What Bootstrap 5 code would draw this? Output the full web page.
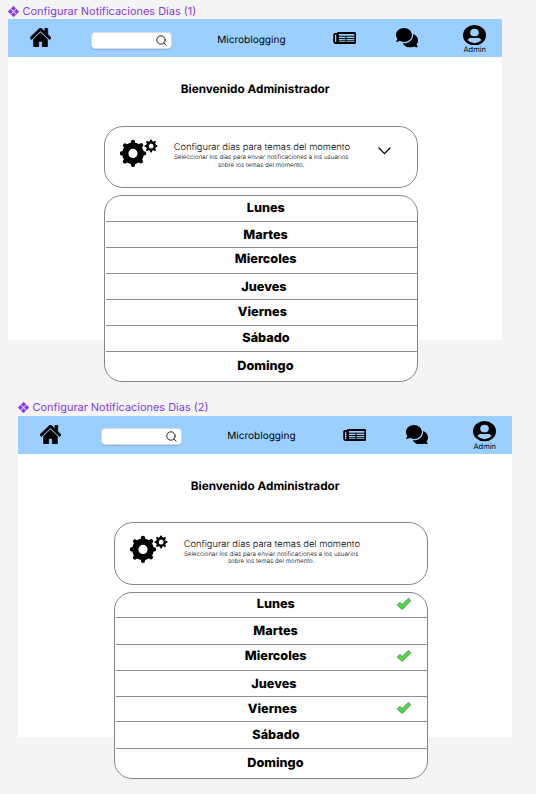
<!DOCTYPE html>
<html lang="es">
<head>
<meta charset="utf-8">
<meta name="viewport" content="width=device-width, initial-scale=1">
<title>Configurar Notificaciones</title>
<link href="https://cdn.jsdelivr.net/npm/bootstrap@5.3.0/dist/css/bootstrap.min.css" rel="stylesheet">
<style>
body{background:#f4f4f4;font-family:Inter,"Liberation Sans",sans-serif;color:#000;height:794px;overflow:hidden;text-rendering:geometricPrecision}
svg{display:block;flex:none}
.board{width:494.4px;margin-left:8px;padding-top:4px;height:396.5px}
.board-second{margin-left:18px;padding-top:3.5px}
.board-name{height:15px;color:#8638e5;font-size:10.95px;line-height:15px;gap:3.5px}
.board-second .board-name{margin-bottom:.5px}
.screen{background:#fff;height:321px}
.topbar{background:#9bcfff;height:38px;padding:0}
.home-link{margin-left:22.4px;margin-top:-1px}
.search-box{width:80.5px;height:17px;margin-left:40px;margin-top:4px;border-radius:4px;border:.5px solid #d5dbe2;background:#fff;padding-right:4.2px;box-shadow:0 1px 1px #0002}
.brand-text{margin-left:45.3px;width:68px;font-size:10.05px;margin-top:3px;line-height:14px}
.news{margin-left:47.8px}
.talk{margin-left:39.5px}
.user-box{margin-left:44.7px;width:24px;font-size:7.5px;line-height:8px;padding-top:2.5px}
.user-box span{margin-top:1px}
.welcome{font-size:11.75px;font-weight:700;line-height:14px;margin:25px 0 0 172.7px}
.config{width:314.2px;height:62.5px;margin:29.6px 0 0 96px;border:1px solid #858585;border-radius:19px;background:#fff;padding:12px 0 0 15.2px}
.config-copy{margin-left:15.5px;width:177px;padding-top:2.5px;font-weight:300}
.config-title{font-size:9.32px;line-height:14px}
.config-help{font-size:6.2px;line-height:7.3px;width:175px;margin-top:-.8px}
.chevron{margin:8.2px 0 0 27.2px}
.days{width:314px;height:187px;margin:7px 0 0 96.2px;border:1px solid #858585;border-radius:18px;background:#fff;font-size:12.65px;font-weight:800;overflow:hidden}
.day{border-bottom:1px solid #8e8e8e;line-height:13px;margin-left:1px}
.day:last-child{border:0}
.d1{height:25.5px;padding:5.5px 16.5px 0 140.6px}
.d2{height:26.5px;padding:7px 16.5px 0 137.1px}
.d3{height:26px;padding:5px 16.5px 0 128.6px}
.d4{height:26px;padding:7px 16.5px 0 135.1px}
.d5{height:25.5px;padding:6px 16.5px 0 131.6px}
.d6{height:26.5px;padding:6.5px 16.5px 0 136.1px}
.d7{height:29px;padding:8px 16.5px 0 131.1px}
.d5 svg{margin-top:-1px}
</style>
<script src="https://cdn.jsdelivr.net/npm/bootstrap@5.3.0/dist/js/bootstrap.bundle.min.js"></script>
</head>
<body>
<svg width="0" height="0" class="position-absolute">
<defs>
<symbol id="i-comp" viewBox="0 0 10 10"><path fill="#8638e5" d="M5 0 7.2 2.2 5 4.4 2.8 2.2zM5 5.6 7.2 7.8 5 10 2.8 7.8zM2.2 2.8 4.4 5 2.2 7.2 0 5zM7.8 2.8 10 5 7.8 7.2 5.6 5z" stroke="#8638e5" stroke-width=".2"/></symbol>
<symbol id="i-home" viewBox="0 32 576 448" preserveAspectRatio="none"><path d="M280.37 148.26L96 300.11V464a16 16 0 0 0 16 16l112.06-.29a16 16 0 0 0 15.92-16V368a16 16 0 0 1 16-16h64a16 16 0 0 1 16 16v95.64a16 16 0 0 0 16 16.05L464 480a16 16 0 0 0 16-16V300L295.67 148.26a12.19 12.19 0 0 0-15.3 0zM571.6 251.47L488 182.56V44.05a12 12 0 0 0-12-12h-56a12 12 0 0 0-12 12v72.61L318.47 43a48 48 0 0 0-61 0L4.34 251.47a12 12 0 0 0-1.6 16.9l25.5 31A12 12 0 0 0 45.15 301l235.22-193.74a12.19 12.19 0 0 1 15.3 0L530.9 301a12 12 0 0 0 16.9-1.6l25.5-31a12 12 0 0 0-1.7-16.93z" stroke="#000" stroke-width="14"/></symbol>
<symbol id="i-search" viewBox="0 0 11 11"><g fill="none" stroke="#111" stroke-width=".9" stroke-linecap="round"><circle cx="5" cy="5" r="4.2"/><path d="M8 8 10.2 10.3"/></g></symbol>
<symbol id="i-news" viewBox="0 0 23 12"><path d="M3.9 1H21.3Q22.1 1 22.1 1.8V10.2Q22.1 11 21.3 11H2.2Q.9 11 .9 9.8V2.6Q.9 1.9 1.6 1.9H3.6M3.9 1V9.8Q3.9 11 2.4 11" fill="none" stroke="#000" stroke-width="1.8"/><path d="M4 4.2H22M4 6.6H22M4 8.8H22M12.8 4V11M5.2 1V10" stroke="#000" stroke-width="1"/></symbol>
<symbol id="i-talk" viewBox="0 32 576 448" preserveAspectRatio="none"><path d="M416 192c0-88.4-93.1-160-208-160S0 103.6 0 192c0 34.3 14.1 65.9 38 92-13.4 30.2-35.5 54.2-35.8 54.5-2.2 2.3-2.8 5.7-1.5 8.7S4.8 352 8 352c36.6 0 66.9-12.3 88.7-25 32.2 15.7 70.3 25 111.3 25 114.9 0 208-71.6 208-160zm122 220c23.9-26 38-57.7 38-92 0-66.9-53.5-124.2-129.3-148.1.9 6.6 1.3 13.3 1.3 20.1 0 105.9-107.7 192-240 192-10.8 0-21.3-.8-31.7-1.9C207.8 439.6 281.8 480 368 480c41 0 79.1-9.2 111.3-25 21.8 12.7 52.1 25 88.7 25 3.2 0 6.1-1.9 7.3-4.8 1.3-2.9.7-6.3-1.5-8.7-.3-.3-22.4-24.2-35.8-54.5z"/></symbol>
<symbol id="i-user" viewBox="0 0 24 24" preserveAspectRatio="none"><path fill-rule="evenodd" d="M12 0a12 12 0 1 1 0 24a12 12 0 0 1 0-24zM12 4.4a4.5 4.5 0 1 0 0 9a4.5 4.5 0 0 0 0-9zM4.6 17.6Q12 25.4 19.4 17.6Q17.8 14.8 14.8 14.8Q12 15.9 9.2 14.8Q6.2 14.8 4.6 17.6z"/></symbol>
<symbol id="i-gears" viewBox="0 0 38 28">
<circle cx="13" cy="14.4" r="7.7" fill="none" stroke="#000" stroke-width="6.2"/>
<g stroke="#000" stroke-width="4.2" stroke-linecap="round"><path d="M13 2.8V5.4M13 23.4V25.9M1.8 14.4H5M22 14.4H24.2"/><path d="M13 2.8V5.4M13 23.4V25.9M1.8 14.4H5M22 14.4H24.2" transform="rotate(45 13 14.4)"/></g>
<circle cx="31" cy="7" r="3.8" fill="none" stroke="#000" stroke-width="2.5"/>
<g stroke="#000" stroke-width="2.1" stroke-linecap="round"><path d="M31 1.5V3.5M31 10.5V12.5M25.5 7H28M35 7H36.5"/><path d="M31 1.5V3.5M31 10.5V12.5M25.5 7H28M35 7H36.5" transform="rotate(45 31 7)"/></g>
</symbol>
<symbol id="i-down" viewBox="0 0 13 8"><path d="M1 1 6.5 6.6 12 1" fill="none" stroke="#000" stroke-width="1.3" stroke-linecap="round" stroke-linejoin="round"/></symbol>
<symbol id="i-tick" viewBox="0 0 14 12"><path d="M.8 6.4 2.3 4.9Q2.9 4.4 3.5 4.9L5.2 6.5 10.9 .9Q11.5 .4 12.1 .9L13.3 2Q13.8 2.6 13.3 3.2L5.8 11Q5.2 11.6 4.6 11L.8 7.6Q.3 7 .8 6.4z" fill="#4fdc49" stroke="#3d6b3b" stroke-width=".7"/></symbol>
</defs>
</svg>

<section class="board">
  <div class="board-name d-flex align-items-center"><svg width="11" height="11"><use href="#i-comp"/></svg><span class="text-nowrap">Configurar Notificaciones Días (1)</span></div>
  <main class="screen">
    <nav class="topbar navbar d-flex flex-nowrap justify-content-start align-items-center">
      <svg class="home-link" width="21" height="19"><use href="#i-home"/></svg>
      <div class="search-box d-flex align-items-center justify-content-end"><svg width="11" height="11"><use href="#i-search"/></svg></div>
      <span class="brand-text text-nowrap">Microblogging</span>
      <svg class="news" width="23.5" height="12"><use href="#i-news"/></svg>
      <svg class="talk" width="22" height="19.5"><use href="#i-talk"/></svg>
      <div class="user-box d-flex flex-column align-items-center"><svg width="23" height="20.5"><use href="#i-user"/></svg><span>Admin</span></div>
    </nav>
    <h1 class="welcome text-nowrap">Bienvenido Administrador</h1>
    <div class="config d-flex align-items-start">
      <svg width="38" height="28"><use href="#i-gears"/></svg>
      <div class="config-copy"><div class="config-title text-nowrap">Configurar días para temas del momento</div><div class="config-help text-center text-nowrap">Seleccionar los días para enviar notificaciones a los usuarios<br>sobre los temas del momento.</div></div>
      <svg class="chevron" width="13" height="8"><use href="#i-down"/></svg>
    </div>
    <div class="days">
      <div class="day d1">Lunes</div>
      <div class="day d2">Martes</div>
      <div class="day d3">Miercoles</div>
      <div class="day d4">Jueves</div>
      <div class="day d5">Viernes</div>
      <div class="day d6">Sábado</div>
      <div class="day d7">Domingo</div>
    </div>
  </main>
</section>

<section class="board board-second">
  <div class="board-name d-flex align-items-center"><svg width="11" height="11"><use href="#i-comp"/></svg><span class="text-nowrap">Configurar Notificaciones Dias (2)</span></div>
  <main class="screen">
    <nav class="topbar navbar d-flex flex-nowrap justify-content-start align-items-center">
      <svg class="home-link" width="21" height="19"><use href="#i-home"/></svg>
      <div class="search-box d-flex align-items-center justify-content-end"><svg width="11" height="11"><use href="#i-search"/></svg></div>
      <span class="brand-text text-nowrap">Microblogging</span>
      <svg class="news" width="23.5" height="12"><use href="#i-news"/></svg>
      <svg class="talk" width="22" height="19.5"><use href="#i-talk"/></svg>
      <div class="user-box d-flex flex-column align-items-center"><svg width="23" height="20.5"><use href="#i-user"/></svg><span>Admin</span></div>
    </nav>
    <h1 class="welcome text-nowrap">Bienvenido Administrador</h1>
    <div class="config d-flex align-items-start">
      <svg width="38" height="28"><use href="#i-gears"/></svg>
      <div class="config-copy"><div class="config-title text-nowrap">Configurar días para temas del momento</div><div class="config-help text-center text-nowrap">Seleccionar los días para enviar notificaciones a los usuarios<br>sobre los temas del momento.</div></div>
    </div>
    <div class="days">
      <div class="day d1 d-flex justify-content-between align-items-start">Lunes<svg width="14" height="12"><use href="#i-tick"/></svg></div>
      <div class="day d2">Martes</div>
      <div class="day d3 d-flex justify-content-between align-items-start">Miercoles<svg width="14" height="12"><use href="#i-tick"/></svg></div>
      <div class="day d4">Jueves</div>
      <div class="day d5 d-flex justify-content-between align-items-start">Viernes<svg width="14" height="12"><use href="#i-tick"/></svg></div>
      <div class="day d6">Sábado</div>
      <div class="day d7">Domingo</div>
    </div>
  </main>
</section>
</body>
</html>
